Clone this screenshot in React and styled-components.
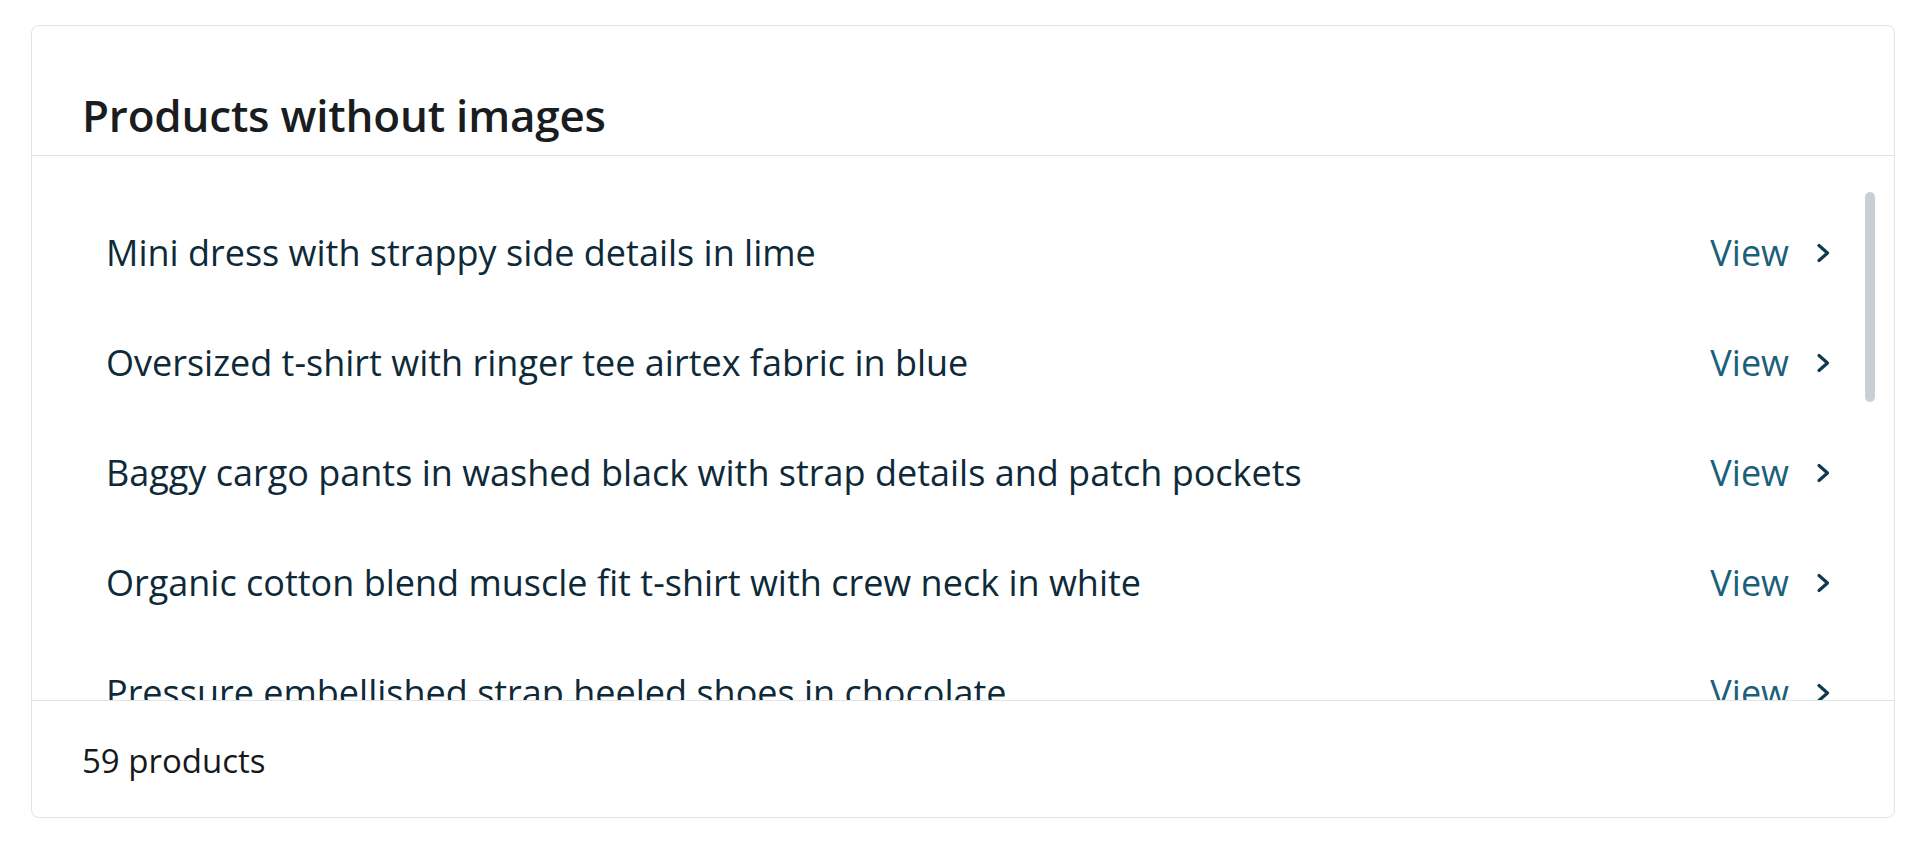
import React from "react";
import styled, { createGlobalStyle } from "styled-components";

const GlobalStyle = createGlobalStyle`
  * {
    box-sizing: border-box;
    margin: 0;
    padding: 0;
  }

  body {
    background: #ffffff;
    font-family: "Open Sans", "Noto Sans", sans-serif;
  }
`;

const Page = styled.div`
  padding: 25px 25px 0 31px;
`;

const Card = styled.section`
  display: flex;
  flex-direction: column;
  height: 793px;
  border: 1px solid #e2e4e6;
  border-radius: 8px;
  background: #fff;
  overflow: hidden;
`;

const Header = styled.header`
  display: flex;
  align-items: flex-end;
  height: 130px;
  padding: 0 0 18px 50px;
  border-bottom: 1px solid #e2e4e6;
`;

const Title = styled.h2`
  font-size: 44px;
  line-height: 1;
  font-weight: 600;
  color: #1a1d20;
  letter-spacing: -0.2px;
`;

const Body = styled.div`
  position: relative;
  flex: 1;
  overflow: hidden;
  padding-top: 42px;
  border-bottom: 1px solid #e2e4e6;
`;

const List = styled.ul`
  list-style: none;
`;

const Row = styled.li`
  display: flex;
  align-items: center;
  justify-content: space-between;
  height: 110px;
  padding: 0 62px 0 74px;
`;

const Name = styled.span`
  font-size: 36px;
  line-height: 1;
  color: #0e2a39;
`;

const ViewLink = styled.a`
  display: flex;
  align-items: center;
  gap: 27px;
  font-size: 36px;
  line-height: 1;
  color: #1c5f7c;
  text-decoration: none;
  cursor: pointer;
`;

const Chevron = styled.svg`
  width: 16px;
  height: 22px;
  color: #0f3a4e;
`;

const Thumb = styled.div`
  position: absolute;
  top: 36px;
  right: 19px;
  width: 10px;
  height: 210px;
  border-radius: 5px;
  background: #c8d0d5;
`;

const Footer = styled.footer`
  height: 116px;
  padding: 43px 0 0 50px;
  font-size: 33px;
  line-height: 1;
  color: #15191c;
`;

const products = [
  "Mini dress with strappy side details in lime",
  "Oversized t-shirt with ringer tee airtex fabric in blue",
  "Baggy cargo pants in washed black with strap details and patch pockets",
  "Organic cotton blend muscle fit t-shirt with crew neck in white",
  "Pressure embellished strap heeled shoes in chocolate",
  "Relaxed fit linen shirt with revere collar in sage",
];

const App = () => {
  return (
    <>
      <GlobalStyle />
      <Page>
        <Card>
          <Header>
            <Title>Products without images</Title>
          </Header>

          <Body>
            <List>
              {products.map((name) => (
                <Row key={name}>
                  <Name>{name}</Name>
                  <ViewLink>
                    View
                    <Chevron viewBox="0 0 16 22" fill="none">
                      <polyline
                        points="3,3.5 11.5,11 3,18.5"
                        stroke="currentColor"
                        strokeWidth="3.2"
                        strokeLinecap="round"
                        strokeLinejoin="round"
                      />
                    </Chevron>
                  </ViewLink>
                </Row>
              ))}
            </List>
            <Thumb />
          </Body>

          <Footer>59 products</Footer>
        </Card>
      </Page>
    </>
  );
};

export default App;
